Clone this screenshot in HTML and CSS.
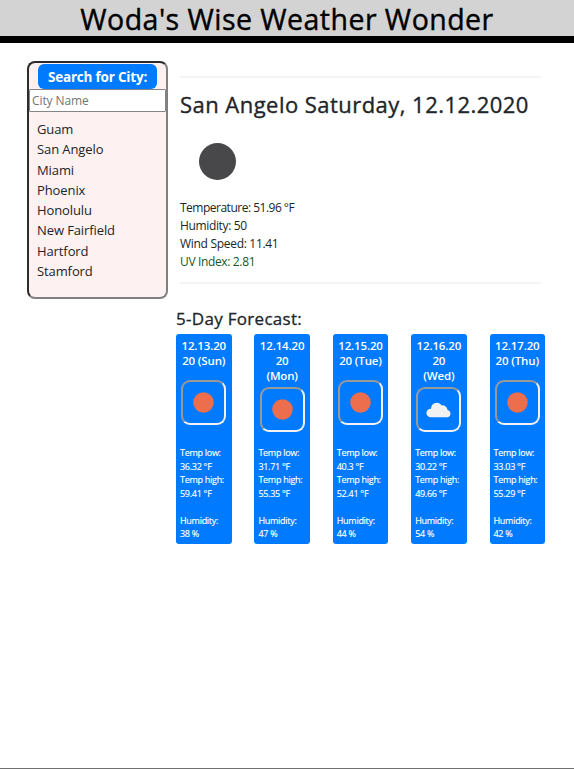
FILE: index.html
```html
<!DOCTYPE html>
<html lang="en">
<head>
<meta charset="utf-8">
<title>Woda's Wise Weather Wonder</title>
<link rel="stylesheet" href="styles.css">
</head>
<body>
<header class="banner"><h1>Woda's Wise Weather Wonder</h1></header>
<main class="layout">
  <aside class="search">
    <h2 class="search-title">Search for City:</h2>
    <input class="search-input" type="text" placeholder="City Name">
    <ul class="cities">
      <li>Guam</li><li>San Angelo</li><li>Miami</li><li>Phoenix</li><li>Honolulu</li><li>New Fairfield</li><li>Hartford</li><li>Stamford</li>
    </ul>
  </aside>
  <div class="content">
    <section class="current">
      <h2 class="place">San Angelo Saturday, 12.12.2020</h2>
      <svg class="now-icon" viewBox="0 0 76 76"><circle cx="37.5" cy="38.5" r="18.5" fill="#48484a"/></svg>
      <p class="temperature">Temperature: 51.96 °F</p>
      <p class="humidity">Humidity: 50</p>
      <p class="wind">Wind Speed: 11.41</p>
      <p class="uv">UV Index: 2.81</p>
    </section>
    <h3 class="forecast-title">5-Day Forecast:</h3>
    <section class="forecast">
      <article class="day">
        <h4>12.13.20<br>20 (Sun)</h4>
        <svg class="icon" viewBox="0 0 40 40"><circle cx="20" cy="20" r="10" fill="#ec6e4c"/></svg>
        <p>Temp low:<br>36.32 °F<br>Temp high:<br>59.41 °F<br><br>Humidity:<br>38 %</p>
      </article>
      <article class="day">
        <h4>12.14.20<br>20<br>(Mon)</h4>
        <svg class="icon" viewBox="0 0 40 40"><circle cx="20" cy="20" r="10" fill="#ec6e4c"/></svg>
        <p>Temp low:<br>31.71 °F<br>Temp high:<br>55.35 °F<br><br>Humidity:<br>47 %</p>
      </article>
      <article class="day">
        <h4>12.15.20<br>20 (Tue)</h4>
        <svg class="icon" viewBox="0 0 40 40"><circle cx="20" cy="20" r="10" fill="#ec6e4c"/></svg>
        <p>Temp low:<br>40.3 °F<br>Temp high:<br>52.41 °F<br><br>Humidity:<br>44 %</p>
      </article>
      <article class="day">
        <h4>12.16.20<br>20<br>(Wed)</h4>
        <svg class="icon" viewBox="0 0 40 40"><path d="M12 27.5A3.9 3.9 0 0 1 12.8 19.2A5.7 5.7 0 0 1 23.2 16A5 5 0 0 1 28.8 20.5A3.6 3.6 0 0 1 29 27.5Z" fill="#f2f2f2"/></svg>
        <p>Temp low:<br>30.22 °F<br>Temp high:<br>49.66 °F<br><br>Humidity:<br>54 %</p>
      </article>
      <article class="day">
        <h4>12.17.20<br>20 (Thu)</h4>
        <svg class="icon" viewBox="0 0 40 40"><circle cx="20" cy="20" r="10" fill="#ec6e4c"/></svg>
        <p>Temp low:<br>33.03 °F<br>Temp high:<br>55.29 °F<br><br>Humidity:<br>42 %</p>
      </article>
    </section>
  </div>
</main>
</body>
</html>
```
FILE: styles.css
```css
* { box-sizing: border-box; }
body {
  margin: 0;
  height: 769px;
  display: flex;
  flex-direction: column;
  border-bottom: 1px solid #707070;
  background: #fff;
  color: #212529;
  font-family: "Open Sans", "Noto Sans", sans-serif;
  overflow: hidden;
}
h1, h2, h3, h4, p, ul { margin: 0; padding: 0; }
.banner {
  height: 43px;
  background: #d3d3d3;
  border-bottom: 7px solid #000;
  color: #000;
  text-align: center;
}
.banner h1 { font-size: 28.5px; font-weight: 400; -webkit-text-stroke: 0.4px; line-height: 39px; letter-spacing: 0.46px; white-space: nowrap; }
.layout { display: flex; align-items: flex-start; padding: 18px 29px 0 27px; }
.search {
  width: 141px;
  height: 238px;
  flex: none;
  background: #fdf1f1;
  border: 2px solid;
  border-color: #2c2c2c #808080 #808080 #2c2c2c;
  border-radius: 8px;
}
.search-title {
  width: 119px;
  height: 25px;
  margin: 1px auto 0;
  border-radius: 6px;
  background: #007bff;
  color: #fff;
  font-size: 13.5px;
  font-weight: 700;
  line-height: 26px;
  letter-spacing: -0.2px;
  text-align: center;
  white-space: nowrap;
}
.search-input {
  display: block;
  width: 137px;
  height: 23px;
  padding: 0 2px;
  border: 1px solid #858585;
  border-radius: 1px;
  background: #fff;
  font: 12px "Open Sans", sans-serif;
  letter-spacing: -0.1px;
}
.search-input::placeholder { color: #757575; }
.cities { list-style: none; padding: 7px 0 0 8px; font-size: 13px; line-height: 20.3px; letter-spacing: -0.1px; }
.content { flex: 1; padding-left: 8px; }
.current {
  height: 208px;
  margin: 15px 4px 0;
  border-top: 2px solid #f4f4f4;
  border-bottom: 2px solid #f4f4f4;
}
.place { margin-top: 9px; font-size: 22px; font-weight: 400; -webkit-text-stroke: 0.35px; line-height: 34px; letter-spacing: 0.46px; white-space: nowrap; }
.now-icon { display: block; width: 76px; height: 76px; margin-top: 2px; }
.current p { font-size: 12px; line-height: 18px; }
.current .temperature { letter-spacing: -0.5px; }
.current .humidity { letter-spacing: -0.35px; }
.current .wind { letter-spacing: -0.3px; }
.current .uv { color: #155724; letter-spacing: -0.35px; }
.forecast-title { margin-top: 22px; height: 28px; font-size: 17px; font-weight: 400; -webkit-text-stroke: 0.3px; line-height: 26px; letter-spacing: 0.3px; }
.forecast { display: flex; justify-content: space-between; width: 369px; }
.day {
  width: 55.5px;
  height: 210px;
  display: flex;
  flex-direction: column;
  align-items: center;
  padding: 4px 0 3.5px;
  border-radius: 3px;
  background: #007bff;
  color: #fff;
}
.day h4 { height: 42.4px; font-size: 11.5px; font-weight: 600; line-height: 15px; letter-spacing: -0.15px; text-align: center; white-space: nowrap; }
.icon {
  flex: none;
  width: 45px;
  height: 45px;
  border: 2px solid;
  border-color: #999 #f2f2f2 #f2f2f2 #999;
  border-radius: 9px;
}
.day:nth-child(even) .icon { position: relative; top: 6.5px; }
.day p { align-self: stretch; margin-top: auto; padding-left: 4px; font-size: 9px; line-height: 13.5px; letter-spacing: -0.28px; -webkit-text-stroke: 0.15px; white-space: nowrap; }
```
